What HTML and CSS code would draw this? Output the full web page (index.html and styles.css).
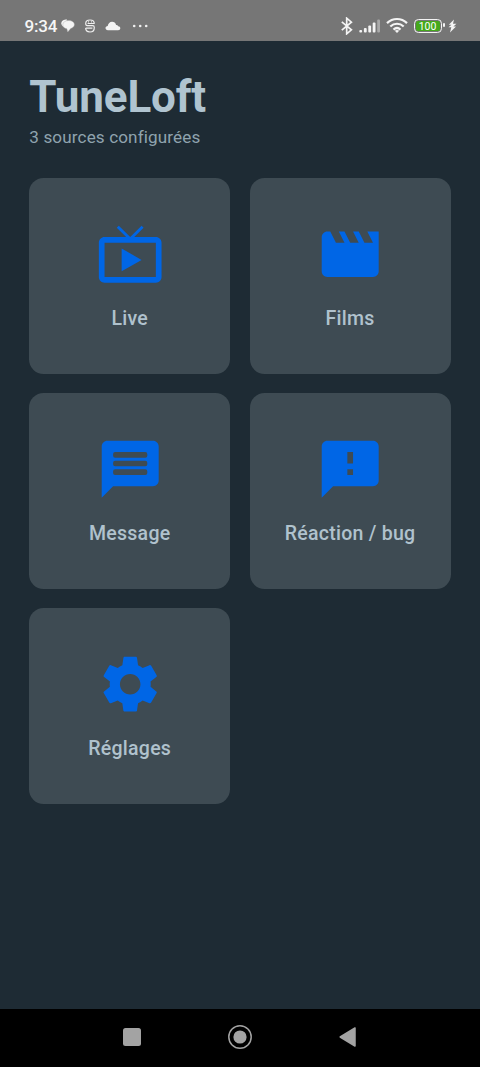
FILE: index.html
```
<!DOCTYPE html>
<html lang="fr">
<head>
<meta charset="utf-8">
<title>TuneLoft</title>
<link rel="stylesheet" href="styles.css">
</head>
<body>
<div class="screen">
  <header class="status">
    <span class="clock">9:34</span>
    <svg class="i-chat" width="14" height="14" viewBox="0 0 14 14"><path fill="#f4f4f4" d="M6 .6C2.600.6.3 2 .3 4.300c0 1.500.8 2.700 2 3.400L4 7z"/><path fill="#f4f4f4" stroke="#a8a8a8" stroke-width=".4" d="M7.700 1.500C4.300 1.500 1.800 3.300 1.800 5.700c0 2.100 1.700 3.700 4.100 4.100L6.700 13l3-3.500c2.200-.5 3.700-2 3.700-3.900 0-2.400-2.400-4.100-5.700-4.100z"/></svg>
    <svg class="i-s" width="12" height="14" viewBox="0 0 12 14" fill="none" stroke="#eee" stroke-width="1.200"><path d="M10.300 4.700C10.300 2.300 8.700 1 6 1S1.700 2.300 1.700 4.500c0 1.400.5 2.200 1.600 2.200h5.400c1.100 0 1.600.6 1.600 1.700 0 2.900-1.600 4.600-4.300 4.600S1.700 11.500 1.700 9.100"/><path d="M3.600 4.500h6.700M1.700 9.100h6.700M4 2.800h.9M7.100 2.800H8"/></svg>
    <svg class="i-cloud" width="16" height="10" viewBox="0 0 16 10"><path fill="#f4f4f4" d="M3 9.200C1.400 9.200.5 8.300.5 7.100S1.400 5 2.700 4.900C3.200 2.500 4.800.8 7.100.8c2 0 3.500 1.200 4 3.200 1-.1 1.700.3 2.100 1.200 1.300.1 2.100.9 2.100 2 0 1.200-.9 2-2.200 2z"/></svg>
    <svg class="i-dots" width="18" height="4" viewBox="0 0 18 4" fill="#f0f0f0"><circle cx="2.200" cy="2" r="1.300"/><circle cx="8.200" cy="2" r="1.300"/><circle cx="14.200" cy="2" r="1.300"/></svg>
    <div class="status-right">
      <svg width="12" height="18" viewBox="0 0 12 18" fill="none" stroke="#f4f4f4" stroke-width="1.700"><path d="M.8 4.800l9.600 8-4.700 4V1.200l4.700 4-9.600 8"/></svg>
      <svg class="i-signal" width="22" height="14" viewBox="0 0 22 14" fill="#f4f4f4"><rect x=".3" y="11" width="2.800" height="2.500" rx="1"/><rect x="4.900" y="9" width="2.800" height="4.500" rx="1"/><rect x="9.300" y="6.500" width="2.800" height="7" rx="1"/><rect x="13.700" y="3.500" width="2.800" height="10" rx="1"/><rect x="18.200" y=".5" width="2.800" height="13" rx="1" fill="#a9a9a9"/></svg>
      <svg class="i-wifi" width="22" height="17" viewBox="0 0 22 17" fill="none" stroke="#f4f4f4" stroke-width="2.200"><path d="M1 6.100c5.700-5.500 14.300-5.500 20 0M4.300 9.500c3.900-3.700 9.500-3.700 13.400 0M7.500 12.600c2.100-1.900 4.900-1.900 7 0"/><path fill="#f4f4f4" stroke="none" d="M8.800 13.700c1.300-1.100 3.100-1.100 4.400 0L11 16z"/></svg>
      <span class="battery"><span class="level">100</span></span>
      <svg class="i-bolt" width="9" height="14" viewBox="0 0 9 14"><path fill="#f4f4f4" d="M6 .5L.8 5.800h2.700L.5 8.300h2.800L2 13.500 8 7.500H5.400L8.400 4.800H5z"/></svg>
    </div>
  </header>
  <main class="content">
    <h1 class="title">TuneLoft</h1>
    <p class="subtitle">3 sources configurées</p>
    <div class="grid">
      <a class="card"><svg class="icon" viewBox="0 0 24 24"><path d="M21 6h-7.590l3.290-3.290L16 2l-4 4-4-4-.71.71L10.590 6H3c-1.100 0-2 .89-2 2v12c0 1.100.9 2 2 2h18c1.100 0 2-.9 2-2V8c0-1.110-.9-2-2-2zm0 14H3V8h18v12zM9 10v8l7-4z"/></svg><span class="label">Live</span></a>
      <a class="card"><svg class="icon" viewBox="0 0 24 24"><path d="M18 4l2 4h-3l-2-4h-2l2 4h-3l-2-4H8l2 4H7L5 4H4c-1.100 0-1.990.9-1.990 2L2 18c0 1.100.9 2 2 2h16c1.100 0 2-.9 2-2V4h-4z"/></svg><span class="label">Films</span></a>
      <a class="card"><svg class="icon" viewBox="0 0 24 24"><path d="M20 2H4c-1.100 0-1.990.9-1.990 2L2 22l4-4h14c1.100 0 2-.9 2-2V4c0-1.100-.9-2-2-2zm-2.700 12H6.700a.7.7 0 0 1-.7-.7v-.6a.7.7 0 0 1 .7-.7h10.600a.7.7 0 0 1 .7.7v.6a.7.7 0 0 1-.7.7zm0-3H6.700a.7.7 0 0 1-.7-.7v-.6a.7.7 0 0 1 .7-.7h10.600a.7.7 0 0 1 .7.7v.6a.7.7 0 0 1-.7.7zm0-3H6.700a.7.7 0 0 1-.7-.7v-.6a.7.7 0 0 1 .7-.7h10.600a.7.7 0 0 1 .7.7v.6a.7.7 0 0 1-.7.7z"/></svg><span class="label">Message</span></a>
      <a class="card"><svg class="icon" viewBox="0 0 24 24"><path d="M20 2H4c-1.100 0-1.990.9-1.990 2L2 22l4-4h14c1.100 0 2-.9 2-2V4c0-1.100-.9-2-2-2zm-7 12h-2v-2h2v2zm0-4h-2V6h2v4z"/></svg><span class="label">Réaction / bug</span></a>
      <a class="card"><svg class="icon" viewBox="0 0 24 24"><path d="M19.140 12.940c.04-.3.06-.61.06-.94 0-.32-.02-.64-.07-.94l2.030-1.580c.18-.14.23-.41.12-.61l-1.920-3.320c-.12-.22-.37-.29-.59-.22l-2.390.96c-.5-.38-1.030-.7-1.620-.94l-.36-2.540c-.04-.24-.24-.41-.48-.41h-3.840c-.24 0-.43.17-.47.41l-.36 2.540c-.59.24-1.130.57-1.620.94l-2.390-.96c-.22-.08-.47 0-.59.22L2.740 8.870c-.12.21-.08.47.12.61l2.030 1.580c-.05.3-.09.63-.09.94s.02.64.07.94l-2.030 1.580c-.18.14-.23.41-.12.61l1.920 3.320c.12.22.37.29.59.22l2.390-.96c.5.38 1.030.7 1.620.94l.36 2.540c.05.24.24.41.48.41h3.840c.24 0 .44-.17.47-.41l.36-2.540c.59-.24 1.130-.56 1.620-.94l2.390.96c.22.08.47 0 .59-.22l1.920-3.320c.12-.22.07-.47-.12-.61l-2.010-1.580zM12 15.600c-1.980 0-3.600-1.620-3.600-3.600s1.620-3.600 3.600-3.600 3.600 1.620 3.600 3.600-1.620 3.600-3.600 3.600z"/></svg><span class="label">Réglages</span></a>
    </div>
  </main>
  <nav class="navbar">
    <svg width="26" height="26" viewBox="0 0 26 26"><rect x="4" y="4" width="18" height="18" rx="2.500" fill="#a3a3a3"/></svg>
    <svg width="26" height="26" viewBox="0 0 26 26"><circle cx="13" cy="13" r="11.200" fill="none" stroke="#a3a3a3" stroke-width="1.500"/><circle cx="13" cy="13" r="6.600" fill="#a3a3a3"/></svg>
    <svg width="26" height="26" viewBox="0 0 26 26"><path d="M5.200 13L20 4v18z" fill="#a3a3a3" stroke="#a3a3a3" stroke-width="1.500" stroke-linejoin="round"/></svg>
  </nav>
</div>
</body>
</html>
```
FILE: styles.css
```
* { box-sizing: border-box; }
body {
  margin: 0;
  background: #1e2b34;
  font-family: Roboto, "Noto Sans", sans-serif;
}
svg { display: block; flex: none; }
.screen {
  display: flex;
  flex-direction: column;
  height: 1067px;
  overflow: hidden;
}
.status {
  display: flex;
  align-items: center;
  flex: none;
  height: 41.200px;
  padding: 10px 23.500px 0 24.500px;
  background: #767676;
  color: #f6f6f6;
}
.clock { font-size: 17px; line-height: 20px; letter-spacing: -0.2px; width: 36.500px; font-weight: 500; }
.i-s { margin-left: 9px; }
.i-cloud { margin-left: 8.500px; }
.i-dots { margin-left: 11.500px; }
.status-right { display: flex; align-items: center; margin-left: auto; }
.i-signal { margin-left: 5.500px; }
.i-wifi { margin-left: 5px; }
.battery {
  position: relative;
  width: 28px;
  height: 14px;
  margin-left: 6px;
  padding: 1px;
  border: 1.500px solid #f4f4f4;
  border-radius: 4.500px;
}
.battery::after {
  content: "";
  position: absolute;
  right: -4px;
  top: 3.500px;
  width: 1.800px;
  height: 4px;
  border-radius: 1px;
  background: #f4f4f4;
}
.level {
  display: block;
  height: 100%;
  border-radius: 2px;
  background: #45a81c;
  color: #fff;
  font-size: 10.500px;
  line-height: 11px;
  font-weight: 400;
  text-align: center;
}
.i-bolt { margin-left: 6px; }
.content { flex: 1; padding: 30.300px 29.500px 0 29.300px; }
.title {
  margin: 0;
  color: #b0c4d0;
  font-size: 44px;
  line-height: 53.800px;
  font-weight: 700;
  letter-spacing: -0.15px;
}
.subtitle {
  margin: 0 0 28.300px;
  color: #8fa3ae;
  font-size: 17.100px;
  line-height: 24.400px;
  letter-spacing: 0.13px;
}
.grid {
  display: grid;
  grid-template-columns: 1fr 1fr;
  grid-auto-rows: 195.600px;
  gap: 19.600px;
}
.card {
  display: flex;
  flex-direction: column;
  align-items: center;
  justify-content: center;
  gap: 14.700px;
  border-radius: 14.700px;
  background: #3e4b53;
}
.icon { width: 68.400px; height: 68.400px; fill: #0066e6; }
.label {
  padding-top: 1px;
  margin-bottom: -1px;
  color: #b0c2cd;
  font-size: 19.550px;
  line-height: 29.300px;
  font-weight: 500;
  letter-spacing: 0.25px;
}
.navbar {
  display: flex;
  flex: none;
  align-items: center;
  justify-content: center;
  gap: 82.300px;
  height: 58px;
  padding-bottom: 2px;
  background: #000;
}
```
